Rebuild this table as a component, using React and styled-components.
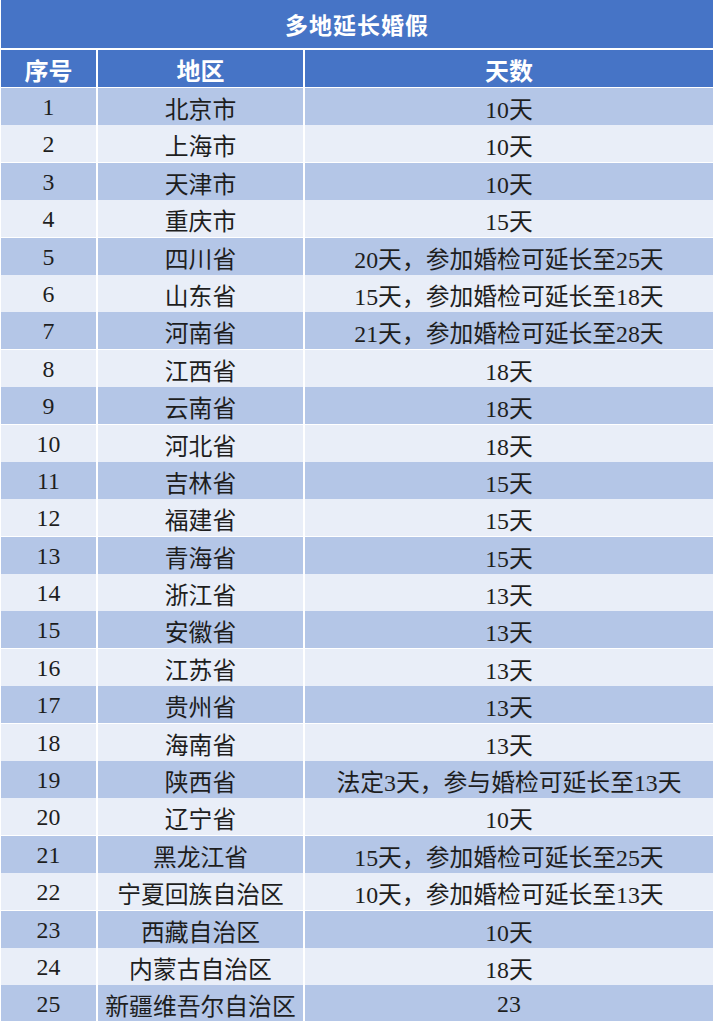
import React from "react";
import styled, { createGlobalStyle } from "styled-components";

const GlobalStyle = createGlobalStyle`
  html, body {
    margin: 0;
    padding: 0;
    background: #ffffff;
  }
  body {
    font-family: "Liberation Serif", "Noto Sans CJK SC", serif;
  }
`;

const Table = styled.div`
  width: 712px;
  padding-left: 1px;
  display: flex;
  flex-direction: column;
  gap: 2px;
  background: #ffffff;
`;

const Title = styled.div`
  height: 48px;
  background: #4674c6;
  color: #ffffff;
  font-size: 23px;
  font-weight: 700;
  letter-spacing: 1px;
  display: flex;
  align-items: center;
  justify-content: center;
`;

const Row = styled.div`
  display: grid;
  grid-template-columns: 95px 205px 1fr;
  gap: 2px;
  height: ${(p) => (p.$head ? "36px" : "35.4px")};
`;

const Cell = styled.div`
  display: flex;
  align-items: center;
  justify-content: center;
  padding-top: 2px;
  background: ${(p) => p.$bg};
  color: ${(p) => (p.$head ? "#ffffff" : "#1e1e1e")};
  font-size: ${(p) => (p.$head ? "24px" : "23.8px")};
  font-weight: ${(p) => (p.$head ? 700 : 400)};
  white-space: nowrap;
`;

const rows = [
  ["北京市", "10天"],
  ["上海市", "10天"],
  ["天津市", "10天"],
  ["重庆市", "15天"],
  ["四川省", "20天，参加婚检可延长至25天"],
  ["山东省", "15天，参加婚检可延长至18天"],
  ["河南省", "21天，参加婚检可延长至28天"],
  ["江西省", "18天"],
  ["云南省", "18天"],
  ["河北省", "18天"],
  ["吉林省", "15天"],
  ["福建省", "15天"],
  ["青海省", "15天"],
  ["浙江省", "13天"],
  ["安徽省", "13天"],
  ["江苏省", "13天"],
  ["贵州省", "13天"],
  ["海南省", "13天"],
  ["陕西省", "法定3天，参与婚检可延长至13天"],
  ["辽宁省", "10天"],
  ["黑龙江省", "15天，参加婚检可延长至25天"],
  ["宁夏回族自治区", "10天，参加婚检可延长至13天"],
  ["西藏自治区", "10天"],
  ["内蒙古自治区", "18天"],
  ["新疆维吾尔自治区", "23"],
];

const HEAD = "#4674c6";
const ODD = "#b4c6e7";
const EVEN = "#e9eef8";

export default function App() {
  return (
    <>
      <GlobalStyle />
      <Table>
        <Title>多地延长婚假</Title>
        <Row $head>
          <Cell $head $bg={HEAD}>序号</Cell>
          <Cell $head $bg={HEAD}>地区</Cell>
          <Cell $head $bg={HEAD}>天数</Cell>
        </Row>
        {rows.map(([region, days], i) => {
          const bg = i % 2 === 0 ? ODD : EVEN;
          return (
            <Row key={region}>
              <Cell $bg={bg}>{i + 1}</Cell>
              <Cell $bg={bg}>{region}</Cell>
              <Cell $bg={bg}>{days}</Cell>
            </Row>
          );
        })}
      </Table>
    </>
  );
}
